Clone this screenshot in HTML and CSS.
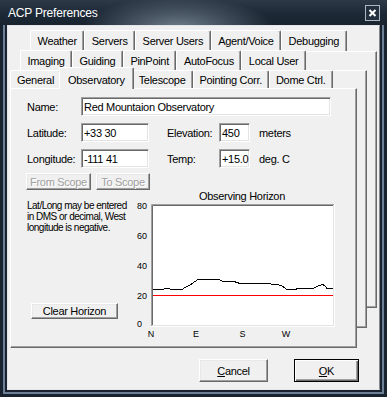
FILE: index.html
```html
<!DOCTYPE html>
<html>
<head>
<meta charset="utf-8">
<title>ACP Preferences</title>
<link rel="stylesheet" href="styles.css">
</head>
<body>
<div class="window">
  <div class="titlebar">
    <span class="title">ACP Preferences</span>
    <svg class="close" width="15" height="16" viewBox="0 0 15 16">
      <rect x="0.5" y="0.5" width="14" height="15" fill="#223040" stroke="#aeb8c3"/>
      <path d="M4.5 5 L10.5 11 M10.5 5 L4.5 11" stroke="#fff" stroke-width="2"/>
    </svg>
  </div>
  <div class="frame">
    <div class="stripe">
      <div class="client">
        <div class="tabstack">
          <div class="layer layer-back">
            <div class="tabrow">
              <div class="tab">Weather</div>
              <div class="tab">Servers</div>
              <div class="tab">Server Users</div>
              <div class="tab">Agent/Voice</div>
              <div class="tab">Debugging</div>
            </div>
            <div class="page"></div>
          </div>
          <div class="layer layer-mid">
            <div class="tabrow">
              <div class="tab">Imaging</div>
              <div class="tab">Guiding</div>
              <div class="tab">PinPoint</div>
              <div class="tab">AutoFocus</div>
              <div class="tab">Local User</div>
            </div>
            <div class="page"></div>
          </div>
          <div class="layer layer-front">
            <div class="tabrow">
              <div class="tab">General</div>
              <div class="tab sel">Observatory</div>
              <div class="tab">Telescope</div>
              <div class="tab">Pointing Corr.</div>
              <div class="tab">Dome Ctrl.</div>
            </div>
            <div class="page front-page">
              <div class="form">
                <span class="label">Name:</span>
                <div class="field field-name">Red Mountaion Observatory</div>
                <span class="label">Latitude:</span>
                <div class="field">+33 30</div>
                <span class="label label2">Elevation:</span>
                <div class="field">450</div>
                <span class="label unit">meters</span>
                <span class="label">Longitude:</span>
                <div class="field">-111 41</div>
                <span class="label label2">Temp:</span>
                <div class="field">+15.0</div>
                <span class="label unit">deg. C</span>
              </div>
              <div class="scope-row">
                <button class="btn btn-from" disabled>From Scope</button>
                <button class="btn btn-to" disabled>To Scope</button>
              </div>
              <div class="lower">
                <div class="notecol">
                  <p class="note">Lat/Long may be entered<br>in DMS or decimal, West<br>longitude is negative.</p>
                  <button class="btn btn-clear">Clear Horizon</button>
                </div>
                <svg class="chart" width="210" height="152" viewBox="0 0 210 152">
                  <text class="chart-title" x="112" y="10" text-anchor="middle">Observing Horizon</text>
                  <text class="axis" x="7" y="19.2">80</text>
                  <text class="axis" x="7" y="49.2">60</text>
                  <text class="axis" x="7" y="79.2">40</text>
                  <text class="axis" x="7" y="108.7">20</text>
                  <text class="axis" x="7" y="137.2">0</text>
                  <rect x="21" y="14" width="184" height="123" fill="#ffffff"/>
                  <path d="M21.5 137 V14.5 H205" stroke="#a0a0a0" fill="none"/>
                  <path d="M22.5 136 V15.5 H204" stroke="#696969" fill="none"/>
                  <path d="M22 135.5 H203.5 V15" stroke="#e3e3e3" fill="none"/>
                  <path d="M21 136.5 H204.5 V14" stroke="#ffffff" fill="none"/>
                  <rect x="23" y="105" width="180" height="1" fill="#ff0000"/>
                  <polyline fill="none" stroke="#000" shape-rendering="crispEdges" points="23,99.5 33,99.5 35,98.5 39,98.5 41,99.5 52,99.5 55,97.5 60,95 68,89.5 70,89.5 89,89.5 93,91.5 104,91.5 110,93.5 140,93.5 142,94.5 148,94.5 153,96.5 157,99.5 165,99.5 168,98.5 183,98.5 188,96 193,94.5 195,96 197,98.5 203,98.5"/>
                  <text class="axis" x="21" y="147.3" text-anchor="middle">N</text>
                  <text class="axis" x="66" y="147.3" text-anchor="middle">E</text>
                  <text class="axis" x="112.5" y="147.3" text-anchor="middle">S</text>
                  <text class="axis" x="156" y="147.3" text-anchor="middle">W</text>
                </svg>
              </div>
            </div>
          </div>
        </div>
        <div class="dlg-buttons">
          <button class="btn btn-cancel"><span><u>C</u>ancel</span></button>
          <button class="btn btn-ok btn-default"><span><u>O</u>K</span></button>
        </div>
      </div>
    </div>
  </div>
</div>
</body>
</html>
```

FILE: styles.css
```css
* { box-sizing: border-box; }
html, body { margin: 0; padding: 0; }
body {
  width: 387px;
  height: 397px;
  overflow: hidden;
  background: #1a2634;
  font-family: "Liberation Sans", Arial, sans-serif;
  font-size: 11px;
  letter-spacing: -0.3px;
  color: #000;
}
.window {
  width: 387px;
  height: 397px;
  display: flex;
  flex-direction: column;
  background: #1a2634;
}
.titlebar {
  height: 25px;
  flex: none;
  display: flex;
  align-items: center;
  justify-content: space-between;
  padding: 0 7px 0 8px;
  background:
    radial-gradient(95px 30px at 178px 27px, rgba(118,132,146,0.9), rgba(118,132,146,0) 100%),
    linear-gradient(180deg, #2d3946 0%, #1d2937 55%, #18232f 100%);
}
.title {
  color: #fff;
  font-size: 12px;
  letter-spacing: -0.2px;
}
.close { display: block; }
.frame {
  flex: 1;
  padding: 0 3px 3px;
  background: #18232f;
}
.stripe {
  height: 100%;
  border: 2px solid #6d7f94;
  border-top: 0;
  padding: 0 2px 2px;
  background: #18232f;
}
.client {
  height: 100%;
  background: #f0f0f0;
  border: 1px solid #e4e6e9;
  border-right-color: #858a91;
  display: flex;
  flex-direction: column;
}

/* stacked tab pages */
.tabstack { display: grid; }
.layer {
  grid-area: 1 / 1;
  align-self: start;
  justify-self: start;
  display: flex;
  flex-direction: column;
}
.layer-back { margin: 4px 0 0 22px; }
.layer-mid { margin: 24px 0 0 12px; }
.layer-front { margin: 44px 0 0 2px; }
.tabrow { display: flex; align-items: flex-end; }
.layer-back .tabrow { height: 21px; }
.layer-mid .tabrow { height: 20px; }
.layer-front .tabrow { height: 18px; }
.tab {
  height: 100%;
  padding: 0 6.5px;
  display: flex;
  align-items: center;
  white-space: nowrap;
  background: #f0f0f0;
  border: 1px solid #fff;
  border-bottom: 0;
  border-right-color: #696969;
  border-radius: 2px 2px 0 0;
  box-shadow: inset -1px 0 #a0a0a0;
}
.layer-front .tab { padding: 0 6px; }
.layer-front .tab.sel {
  position: relative;
  z-index: 1;
  height: 22px;
  margin: 0 -2px -1px;
  padding: 2px 8px 0;
}
.page {
  width: 347px;
  background: #f0f0f0;
  border: 1px solid;
  border-color: #fff #696969 #696969 #fff;
  box-shadow: inset -1px -1px #a0a0a0;
}
.layer-back .page { height: 257px; }
.layer-mid .page { height: 258px; }
.layer-front .page { height: 260px; }

/* observatory page */
.front-page {
  padding: 8px 0 0 16px;
  display: flex;
  flex-direction: column;
}
.form {
  display: grid;
  grid-template-columns: 54px 68px 18px 52px 31px 9px 1fr;
  grid-auto-rows: 19px;
  row-gap: 7px;
  align-items: center;
}
.label { white-space: nowrap; }
.label2 { grid-column: 4; }
.unit { grid-column: 7; }
.field {
  height: 19px;
  background: #fff;
  border: 1px solid;
  border-color: #a0a0a0 #fff #fff #a0a0a0;
  box-shadow: inset 1px 1px #696969, inset -1px -1px #e3e3e3;
  padding: 0 2px;
  display: flex;
  align-items: center;
  white-space: nowrap;
  overflow: hidden;
}
.field-name { grid-column: 2 / span 6; width: 250px; }

.btn {
  font: inherit;
  letter-spacing: inherit;
  color: #000;
  background: #f0f0f0;
  border: 1px solid;
  border-color: #fff #696969 #696969 #fff;
  box-shadow: inset -1px -1px #a0a0a0, inset 1px 1px #e8e8e8;
  padding: 0;
  margin: 0;
  border-radius: 0;
  display: flex;
  align-items: center;
  justify-content: center;
  white-space: nowrap;
}
.btn:disabled {
  color: #a0a0a0;
  text-shadow: 1px 1px #fff;
}
.scope-row {
  display: flex;
  gap: 5px;
  margin: 5px 0 0 -1px;
}
.btn-from { width: 65px; height: 17px; }
.btn-to { width: 54px; height: 17px; }

.lower { display: flex; }
.notecol {
  width: 103px;
  display: flex;
  flex-direction: column;
  align-items: flex-start;
}
.note {
  margin: 10px 0 0;
  font-size: 10px;
  line-height: 11px;
  letter-spacing: -0.5px;
  white-space: nowrap;
}
.btn-clear {
  margin: 70px 0 0 4px;
  width: 87px;
  height: 16px;
}
.chart { display: block; }
.chart text {
  font-family: "Liberation Sans", Arial, sans-serif;
  fill: #000;
}
.chart .chart-title { font-size: 11px; letter-spacing: -0.3px; }
.chart .axis { font-size: 9px; letter-spacing: 0; }

/* dialog buttons */
.dlg-buttons {
  display: flex;
  justify-content: flex-end;
  gap: 26px;
  padding-right: 20px;
  margin-top: 11px;
}
.btn-cancel { width: 69px; height: 23px; }
.btn-ok { width: 65px; height: 23px; }
.btn-default {
  border-color: #000;
  box-shadow: inset 1px 1px #fff, inset -1px -1px #696969, inset -2px -2px #a0a0a0;
}
u { text-decoration: underline; text-underline-offset: 1px; }
```
